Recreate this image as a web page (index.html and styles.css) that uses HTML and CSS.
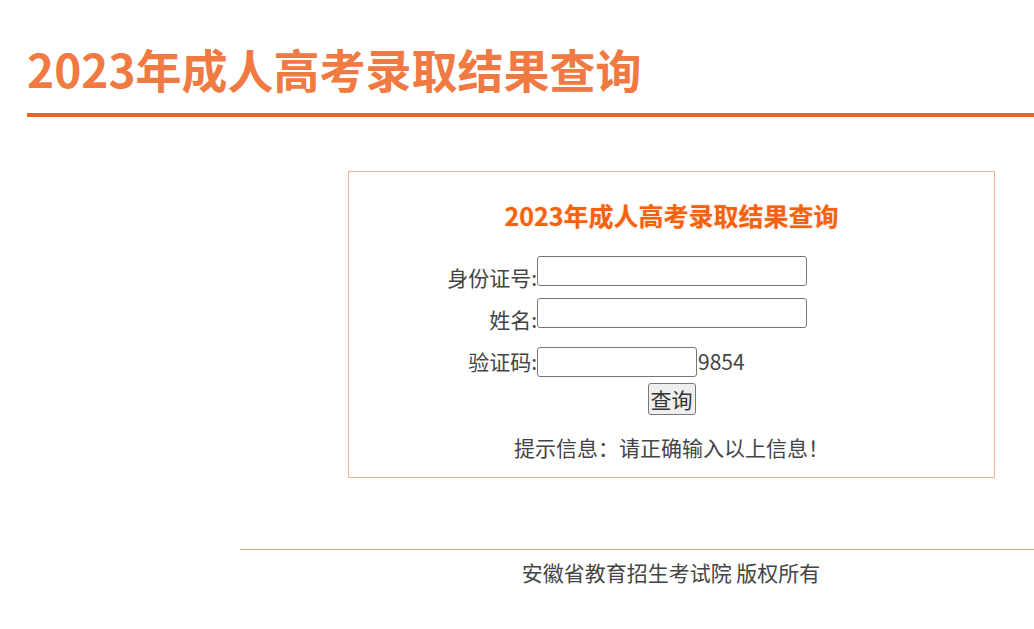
FILE: index.html
```html
<!DOCTYPE html>
<html lang="zh-CN">
<head>
<meta charset="utf-8">
<title>2023年成人高考录取结果查询</title>
<link rel="stylesheet" href="styles.css">
</head>
<body>
<header class="page-header">
  <h1 class="page-title">2023年成人高考录取结果查询</h1>
</header>
<main class="query-box">
  <h2 class="query-title">2023年成人高考录取结果查询</h2>
  <form class="query-form">
    <div class="form-row row-id">
      <label class="form-label" for="sfz">身份证号:</label>
      <input class="form-input" id="sfz" type="text">
    </div>
    <div class="form-row row-name">
      <label class="form-label" for="xm">姓名:</label>
      <input class="form-input" id="xm" type="text">
    </div>
    <div class="form-row row-code">
      <label class="form-label" for="yzm">验证码:</label>
      <input class="form-input input-short" id="yzm" type="text"><span class="code-text">9854</span>
    </div>
    <div class="button-row">
      <button class="query-button" type="button">查询</button>
    </div>
  </form>
  <p class="hint">提示信息：请正确输入以上信息！</p>
</main>
<footer class="page-footer">
  <p class="footer-text">安徽省教育招生考试院 版权所有</p>
</footer>
</body>
</html>
```

FILE: styles.css
```css
html, body {
  margin: 0;
  padding: 0;
  background: #ffffff;
}

body {
  font-family: "Noto Sans CJK SC", "Noto Sans", sans-serif;
  color: #444444;
}

.page-header {
  margin-left: 27px;
  padding-top: 38px;
  padding-bottom: 15px;
  border-bottom: 4px solid #ec6422;
}

.page-title {
  margin: 0;
  font-size: 46px;
  line-height: 60px;
  font-weight: 700;
  color: #f07a42;
  letter-spacing: 0;
}

.query-box {
  box-sizing: border-box;
  width: 647px;
  height: 307px;
  margin: 54px 0 0 348px;
  border: 1px solid #e9b898;
  padding-top: 26px;
}

.query-title {
  margin: 0;
  text-align: center;
  font-size: 25px;
  line-height: 34px;
  font-weight: 700;
  color: #f5620e;
  text-shadow: 0 0 2px rgba(245, 98, 14, 0.35);
}

.query-form {
  margin-top: 24px;
}

.form-row {
  display: flex;
  align-items: flex-end;
}

.row-name {
  margin-top: 12px;
}

.row-code {
  margin-top: 19px;
}

.form-label {
  width: 188px;
  margin-bottom: -2px;
  text-align: right;
  font-size: 21px;
  line-height: 22px;
  color: #444444;
}

.row-code .form-label {
  margin-bottom: 5px;
}

.form-input {
  box-sizing: border-box;
  width: 270px;
  height: 30px;
  margin: 0;
  border: 1px solid #777777;
  border-radius: 3px;
  background: #ffffff;
  padding: 1px 2px;
  font-size: 16px;
}

.input-short {
  width: 160px;
}

.code-text {
  margin-left: 1px;
  margin-bottom: 4px;
  font-size: 21px;
  line-height: 24px;
  color: #444444;
}

.button-row {
  display: flex;
  justify-content: center;
  margin-top: 6px;
}

.query-button {
  box-sizing: border-box;
  width: 48px;
  height: 32px;
  margin: 0;
  padding: 0;
  border: 1px solid #777777;
  border-radius: 3px;
  background: #efefef;
  font-family: "Noto Sans CJK SC", sans-serif;
  font-size: 21px;
  line-height: 28px;
  color: #333333;
}

.hint {
  margin: 20px 0 0;
  text-align: center;
  font-size: 21px;
  line-height: 24px;
  color: #444444;
}

.page-footer {
  margin: 71px 0 0 240px;
  border-top: 1px solid #d9a27e;
}

.footer-text {
  margin: 10px 0 0;
  padding-left: 68px;
  text-align: center;
  font-size: 21px;
  line-height: 24px;
  color: #444444;
}
```
